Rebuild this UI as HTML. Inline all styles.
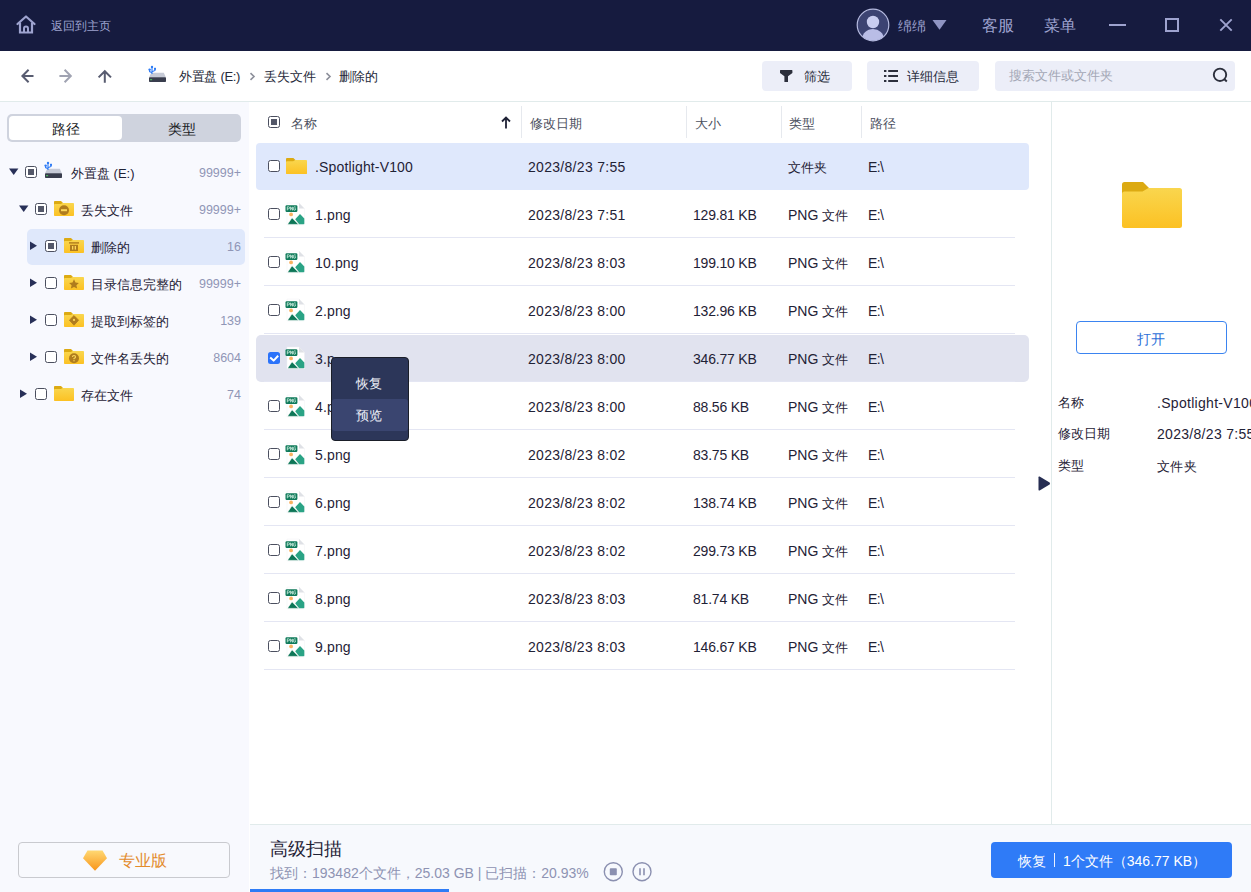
<!DOCTYPE html>
<html><head><meta charset="utf-8">
<style>
*{margin:0;padding:0;box-sizing:border-box}
html,body{width:1251px;height:892px;overflow:hidden;background:#fff;font-family:"Liberation Sans",sans-serif;color:#1f2236}
.a{position:absolute}
.t{position:absolute;white-space:nowrap;line-height:1}
#hdr{position:absolute;left:0;top:0;width:1251px;height:51px;background:#161b3f}
#tb{position:absolute;left:0;top:51px;width:1251px;height:51px;background:#fff;border-bottom:1px solid #e1ebeb}
#side{position:absolute;left:0;top:102px;width:249px;height:790px;background:#f8f9fe}
#main{position:absolute;left:249px;top:102px;width:802px;height:722px;background:#fff}
#right{position:absolute;left:1051px;top:102px;width:200px;height:722px;background:#fff;border-left:1px solid #e1ebeb}
#status{position:absolute;left:250px;top:824px;width:1001px;height:68px;background:#f7f9fd;border-top:1px solid #e1ebeb}
.cb{position:absolute;width:12px;height:12px;border:1.5px solid #4b4f5f;border-radius:2.5px;background:#fff}
.cb.part::after{content:"";position:absolute;left:1.5px;top:1.5px;width:6px;height:6px;background:#545869}
.sep{position:absolute;left:264px;width:751px;height:1px;background:#e4e6f3}
.hsep{position:absolute;top:118px;width:1px;height:32px;background:#e6e9ee}
.f14{font-size:14px}
</style></head><body>
<div id="hdr">
<svg class="a" style="left:16px;top:15px" width="20" height="19" viewBox="0 0 20 19"><path d="M1.5 9L10 1.5 18.5 9" fill="none" stroke="#9ea3cf" stroke-width="2.2" stroke-linecap="round" stroke-linejoin="round"/><path d="M4 7.5V17.5H16V7.5" fill="none" stroke="#9ea3cf" stroke-width="2.2"/><path d="M8 17.5V13.5Q8 11.5 10 11.5Q12 11.5 12 13.5V17.5" fill="none" stroke="#9ea3cf" stroke-width="2"/></svg>
<div class="t" style="left:51px;top:20px;font-size:12px;color:#9ea3cf">返回到主页</div>
<svg class="a" style="left:856px;top:8px" width="34" height="34" viewBox="0 0 34 34"><defs><clipPath id="avc"><circle cx="17" cy="17" r="15.5"/></clipPath></defs><circle cx="17" cy="17" r="15.8" fill="#3c4372" stroke="#b6bbe0" stroke-width="1.2"/><g clip-path="url(#avc)"><circle cx="17" cy="14" r="6.2" fill="#c9cdf0"/><ellipse cx="17" cy="31.5" rx="11" ry="10.5" fill="#b9bde6"/></g></svg>
<div class="t" style="left:898px;top:19px;font-size:14px;color:#9ea3cf">绵绵</div>
<svg class="a" style="left:932px;top:20px" width="15" height="10" viewBox="0 0 15 10"><path d="M.5 0h14L7.5 9.8z" fill="#8f94c2"/></svg>
<div class="t" style="left:982px;top:18px;font-size:16px;color:#9ea3cf">客服</div>
<div class="t" style="left:1044px;top:18px;font-size:16px;color:#9ea3cf">菜单</div>
<div class="a" style="left:1109px;top:24px;width:17px;height:2px;background:#9ea3cf"></div>
<div class="a" style="left:1165px;top:18px;width:14px;height:14px;border:2px solid #9ea3cf"></div>
<svg class="a" style="left:1219px;top:18px" width="14" height="14" viewBox="0 0 14 14"><path d="M1.3 1.3l11.4 11.4M12.7 1.3l-11.4 11.4" stroke="#9ea3cf" stroke-width="1.9"/></svg>
</div>
<div id="tb">
<svg class="a" style="left:20px;top:17px" width="16" height="16" viewBox="0 0 16 16"><path d="M13.5 8H3M8.6 1.8L2.4 8l6.2 6.2" fill="none" stroke="#585c70" stroke-width="2"/></svg>
<svg class="a" style="left:58px;top:17px" width="16" height="16" viewBox="0 0 16 16"><path d="M1.4 8H12M6.6 1.8L12.8 8l-6.2 6.2" fill="none" stroke="#a0a3b2" stroke-width="2"/></svg>
<svg class="a" style="left:96px;top:17px" width="18" height="16" viewBox="0 0 18 16"><path d="M8.8 14.8V3.4M2.6 9.4L8.8 3.2l6.2 6.2" fill="none" stroke="#585c70" stroke-width="2"/></svg>
<svg class="a" style="left:148px;top:14px" width="19" height="18" viewBox="0 0 19 18"><path d="M3.2 7.8H15.8L17.9 12.4H1z" fill="#c6cad6"/><rect x="1" y="12.3" width="17" height="4.7" rx="0.8" fill="#393d4d"/><rect x="2" y="14.1" width="2.2" height="1.2" rx="0.5" fill="#4fb360"/><g stroke="#2f7cf6" stroke-width="1.1" fill="none"><path d="M4 2v7M1.6 5v1.6L4 7.8M7 3.8v1.6L4 6.8"/></g><circle cx="4" cy="1.9" r="1.2" fill="#2f7cf6"/><circle cx="1.6" cy="4.6" r="1.2" fill="#2f7cf6"/><rect x="6" y="2.8" width="2" height="2" fill="#2f7cf6"/></svg>
<div class="t" style="left:179px;top:19px;font-size:13px;letter-spacing:-0.3px;color:#262a3a">外置盘 (E:)</div>
<svg class="a" style="left:249px;top:21px" width="7" height="9" viewBox="0 0 7 9"><path d="M1.5 1.2L5 4.5 1.5 7.8" fill="none" stroke="#8c8f9a" stroke-width="1.6"/></svg>
<div class="t" style="left:264px;top:19px;font-size:13px;color:#262a3a">丢失文件</div>
<svg class="a" style="left:325px;top:21px" width="7" height="9" viewBox="0 0 7 9"><path d="M1.5 1.2L5 4.5 1.5 7.8" fill="none" stroke="#8c8f9a" stroke-width="1.6"/></svg>
<div class="t" style="left:339px;top:19px;font-size:13px;color:#262a3a">删除的</div>
<div class="a" style="left:762px;top:10px;width:90px;height:30px;background:#eceef8;border-radius:4px"></div>
<svg class="a" style="left:780px;top:19px" width="13" height="12" viewBox="0 0 13 12"><path d="M0 .6Q0 0 .6 0H11.8Q12.4 0 12.4 .6V3L8 6.2V12H4.4V6.2L0 3z" fill="#2c2f3c"/></svg>
<div class="t" style="left:804px;top:19px;font-size:13px;color:#262a3a">筛选</div>
<div class="a" style="left:867px;top:10px;width:112px;height:30px;background:#eceef8;border-radius:4px"></div>
<svg class="a" style="left:884px;top:19px" width="14" height="12" viewBox="0 0 14 12"><g fill="#2c2f3c"><rect x="0" y="0" width="2.4" height="2" /><rect x="0" y="5" width="2.4" height="2"/><rect x="0" y="10" width="2.4" height="2"/><rect x="4.2" y="0" width="9.8" height="2"/><rect x="4.2" y="5" width="9.8" height="2"/><rect x="4.2" y="10" width="9.8" height="2"/></g></svg>
<div class="t" style="left:907px;top:19px;font-size:13px;color:#262a3a">详细信息</div>
<div class="a" style="left:995px;top:10px;width:240px;height:30px;background:#eceef8;border-radius:4px"></div>
<div class="t" style="left:1009px;top:18px;font-size:13px;color:#a4a8b6">搜索文件或文件夹</div>
<svg class="a" style="left:1211px;top:15px" width="18" height="18" viewBox="0 0 18 18"><circle cx="9" cy="8.8" r="6.2" fill="none" stroke="#2c2f3c" stroke-width="1.9"/><path d="M13.2 13l2.6 2.4" stroke="#2c2f3c" stroke-width="2" stroke-linecap="butt"/></svg>
</div>
<div id="side">
<div class="a" style="left:7px;top:12px;width:234px;height:28px;background:#cfd3de;border-radius:5px"></div>
<div class="a" style="left:9px;top:14px;width:113px;height:24px;background:#fff;border-radius:4px"></div>
<div class="t" style="left:52px;top:21px;font-size:13.5px;color:#1a1c24">路径</div>
<div class="t" style="left:168px;top:21px;font-size:13.5px;color:#1a1c24">类型</div>
<div class="a" style="left:27px;top:127px;width:218px;height:36px;background:#dfe8fb;border-radius:5px"></div>
<svg class="a" style="left:9px;top:66px" width="10" height="8" viewBox="0 0 10 8"><path d="M0 .5h9.4L4.7 7z" fill="#283058"/></svg>
<div class="cb part" style="left:25px;top:64px"></div>
<svg class="a" style="left:44px;top:59px" width="19" height="18" viewBox="0 0 19 18"><path d="M3.2 7.8H15.8L17.9 12.4H1z" fill="#c6cad6"/><rect x="1" y="12.3" width="17" height="4.7" rx="0.8" fill="#393d4d"/><rect x="2" y="14.1" width="2.2" height="1.2" rx="0.5" fill="#4fb360"/><g stroke="#2f7cf6" stroke-width="1.1" fill="none"><path d="M4 2v7M1.6 5v1.6L4 7.8M7 3.8v1.6L4 6.8"/></g><circle cx="4" cy="1.9" r="1.2" fill="#2f7cf6"/><circle cx="1.6" cy="4.6" r="1.2" fill="#2f7cf6"/><rect x="6" y="2.8" width="2" height="2" fill="#2f7cf6"/></svg>
<div class="t" style="left:71px;top:65px;font-size:13px;color:#1f2236">外置盘 (E:)</div>
<div class="t" style="right:8px;top:65px;font-size:12.5px;color:#9096b6">99999+</div>
<svg class="a" style="left:19px;top:103px" width="10" height="8" viewBox="0 0 10 8"><path d="M0 .5h9.4L4.7 7z" fill="#283058"/></svg>
<div class="cb part" style="left:35px;top:101px"></div>
<svg class="a" style="left:54px;top:99px" width="20" height="15" viewBox="0 0 60 46" preserveAspectRatio="none">
<defs><linearGradient id="fg54_99" x1="0" y1="0" x2="0" y2="1"><stop offset="0" stop-color="#f9d64e"/><stop offset="1" stop-color="#fcc123"/></linearGradient></defs>
<path d="M0 2.5Q0 0 2.5 0H21L27 6V14H0z" fill="#dcaa12"/>
<path d="M0 12Q0 9.4 2.5 9.4H20.5L26.5 6H57.5Q60 6 60 8.5V43.5Q60 46 57.5 46H2.5Q0 46 0 43.5z" fill="url(#fg54_99)"/>
<g transform="scale(3,3.067)"><circle cx="10" cy="9.2" r="5" fill="#b07c1d"/><rect x="7" y="8.2" width="6" height="2" fill="#fcd65a"/></g></svg>
<div class="t" style="left:81px;top:102px;font-size:13px;color:#1f2236">丢失文件</div>
<div class="t" style="right:8px;top:102px;font-size:12.5px;color:#9096b6">99999+</div>
<svg class="a" style="left:30px;top:139px" width="8" height="10" viewBox="0 0 8 10"><path d="M0 .5v8.6L7 4.8z" fill="#283058"/></svg>
<div class="cb part" style="left:45px;top:138px"></div>
<svg class="a" style="left:64px;top:136px" width="20" height="15" viewBox="0 0 60 46" preserveAspectRatio="none">
<defs><linearGradient id="fg64_136" x1="0" y1="0" x2="0" y2="1"><stop offset="0" stop-color="#f9d64e"/><stop offset="1" stop-color="#fcc123"/></linearGradient></defs>
<path d="M0 2.5Q0 0 2.5 0H21L27 6V14H0z" fill="#dcaa12"/>
<path d="M0 12Q0 9.4 2.5 9.4H20.5L26.5 6H57.5Q60 6 60 8.5V43.5Q60 46 57.5 46H2.5Q0 46 0 43.5z" fill="url(#fg64_136)"/>
<g transform="scale(3,3.067)"><rect x="5" y="4.2" width="10" height="1.4" fill="#b07c1d"/><path d="M6 6.8h8v6.2H6z" fill="#b07c1d"/><rect x="8" y="8" width="1.3" height="3.6" fill="#fcd65a"/><rect x="10.7" y="8" width="1.3" height="3.6" fill="#fcd65a"/></g></svg>
<div class="t" style="left:91px;top:139px;font-size:13px;color:#1f2236">删除的</div>
<div class="t" style="right:8px;top:139px;font-size:12.5px;color:#9096b6">16</div>
<svg class="a" style="left:30px;top:176px" width="8" height="10" viewBox="0 0 8 10"><path d="M0 .5v8.6L7 4.8z" fill="#283058"/></svg>
<div class="cb" style="left:45px;top:175px"></div>
<svg class="a" style="left:64px;top:173px" width="20" height="15" viewBox="0 0 60 46" preserveAspectRatio="none">
<defs><linearGradient id="fg64_173" x1="0" y1="0" x2="0" y2="1"><stop offset="0" stop-color="#f9d64e"/><stop offset="1" stop-color="#fcc123"/></linearGradient></defs>
<path d="M0 2.5Q0 0 2.5 0H21L27 6V14H0z" fill="#dcaa12"/>
<path d="M0 12Q0 9.4 2.5 9.4H20.5L26.5 6H57.5Q60 6 60 8.5V43.5Q60 46 57.5 46H2.5Q0 46 0 43.5z" fill="url(#fg64_173)"/>
<g transform="scale(3,3.067)"><path d="M10 4.3l1.5 3.2 3.4.4-2.5 2.3.7 3.4L10 12l-3.1 1.6.7-3.4L5.1 7.9l3.4-.4z" fill="#b07c1d"/></g></svg>
<div class="t" style="left:91px;top:176px;font-size:13px;color:#1f2236">目录信息完整的</div>
<div class="t" style="right:8px;top:176px;font-size:12.5px;color:#9096b6">99999+</div>
<svg class="a" style="left:30px;top:213px" width="8" height="10" viewBox="0 0 8 10"><path d="M0 .5v8.6L7 4.8z" fill="#283058"/></svg>
<div class="cb" style="left:45px;top:212px"></div>
<svg class="a" style="left:64px;top:210px" width="20" height="15" viewBox="0 0 60 46" preserveAspectRatio="none">
<defs><linearGradient id="fg64_210" x1="0" y1="0" x2="0" y2="1"><stop offset="0" stop-color="#f9d64e"/><stop offset="1" stop-color="#fcc123"/></linearGradient></defs>
<path d="M0 2.5Q0 0 2.5 0H21L27 6V14H0z" fill="#dcaa12"/>
<path d="M0 12Q0 9.4 2.5 9.4H20.5L26.5 6H57.5Q60 6 60 8.5V43.5Q60 46 57.5 46H2.5Q0 46 0 43.5z" fill="url(#fg64_210)"/>
<g transform="scale(3,3.067)"><path d="M10 3.6L14.6 8.2 10 13.2 5.4 8.2z" fill="#b07c1d" stroke="#b07c1d" stroke-width="0.8" stroke-linejoin="round"/><circle cx="10" cy="7.9" r="1.1" fill="#fcd65a"/></g></svg>
<div class="t" style="left:91px;top:213px;font-size:13px;color:#1f2236">提取到标签的</div>
<div class="t" style="right:8px;top:213px;font-size:12.5px;color:#9096b6">139</div>
<svg class="a" style="left:30px;top:250px" width="8" height="10" viewBox="0 0 8 10"><path d="M0 .5v8.6L7 4.8z" fill="#283058"/></svg>
<div class="cb" style="left:45px;top:249px"></div>
<svg class="a" style="left:64px;top:247px" width="20" height="15" viewBox="0 0 60 46" preserveAspectRatio="none">
<defs><linearGradient id="fg64_247" x1="0" y1="0" x2="0" y2="1"><stop offset="0" stop-color="#f9d64e"/><stop offset="1" stop-color="#fcc123"/></linearGradient></defs>
<path d="M0 2.5Q0 0 2.5 0H21L27 6V14H0z" fill="#dcaa12"/>
<path d="M0 12Q0 9.4 2.5 9.4H20.5L26.5 6H57.5Q60 6 60 8.5V43.5Q60 46 57.5 46H2.5Q0 46 0 43.5z" fill="url(#fg64_247)"/>
<g transform="scale(3,3.067)"><circle cx="10" cy="9.2" r="5" fill="#b07c1d"/><path d="M8.5 8.1q0-1.6 1.5-1.6t1.5 1.5q0 1-1.5 1.5v.8" fill="none" stroke="#fcd65a" stroke-width="1.2"/><circle cx="10" cy="11.8" r="0.7" fill="#fcd65a"/></g></svg>
<div class="t" style="left:91px;top:250px;font-size:13px;color:#1f2236">文件名丢失的</div>
<div class="t" style="right:8px;top:250px;font-size:12.5px;color:#9096b6">8604</div>
<svg class="a" style="left:20px;top:287px" width="8" height="10" viewBox="0 0 8 10"><path d="M0 .5v8.6L7 4.8z" fill="#283058"/></svg>
<div class="cb" style="left:35px;top:286px"></div>
<svg class="a" style="left:54px;top:284px" width="20" height="15" viewBox="0 0 60 46" preserveAspectRatio="none">
<defs><linearGradient id="fg54_284" x1="0" y1="0" x2="0" y2="1"><stop offset="0" stop-color="#f9d64e"/><stop offset="1" stop-color="#fcc123"/></linearGradient></defs>
<path d="M0 2.5Q0 0 2.5 0H21L27 6V14H0z" fill="#dcaa12"/>
<path d="M0 12Q0 9.4 2.5 9.4H20.5L26.5 6H57.5Q60 6 60 8.5V43.5Q60 46 57.5 46H2.5Q0 46 0 43.5z" fill="url(#fg54_284)"/>
<g transform="scale(3,3.067)"></g></svg>
<div class="t" style="left:81px;top:287px;font-size:13px;color:#1f2236">存在文件</div>
<div class="t" style="right:8px;top:287px;font-size:12.5px;color:#9096b6">74</div>
<div class="a" style="left:18px;top:740px;width:212px;height:36px;border:1px solid #c9cacf;border-radius:4px;background:#f8f9fd"></div>
<svg class="a" style="left:83px;top:748px" width="24" height="21" viewBox="0 0 24 21"><defs><linearGradient id="dg" x1="0" y1="0" x2="0" y2="1"><stop offset="0" stop-color="#ffd872"/><stop offset="1" stop-color="#f8941a"/></linearGradient></defs><path d="M4.5 .6H19.5L24 8.3 12 20.7 0 8.3z" fill="url(#dg)"/></svg>
<div class="t" style="left:119px;top:751px;font-size:16px;color:#e38b2c">专业版</div>
</div>
<div id="main"></div>
<div class="cb part" style="left:268px;top:116px"></div>
<div class="t" style="left:291px;top:117px;font-size:13px;color:#4b4f5e">名称</div>
<svg class="a" style="left:501px;top:116px" width="10" height="13" viewBox="0 0 10 13"><path d="M5 12.5V1.5M1 5.5l4-4 4 4" fill="none" stroke="#1f2236" stroke-width="1.8"/></svg>
<div class="t" style="left:530px;top:117px;font-size:13px;color:#4b4f5e">修改日期</div>
<div class="t" style="left:695px;top:117px;font-size:13px;color:#4b4f5e">大小</div>
<div class="t" style="left:789px;top:117px;font-size:13px;color:#4b4f5e">类型</div>
<div class="t" style="left:870px;top:117px;font-size:13px;color:#4b4f5e">路径</div>
<div class="hsep" style="left:521px;top:106px"></div>
<div class="hsep" style="left:686px;top:106px"></div>
<div class="hsep" style="left:781px;top:106px"></div>
<div class="hsep" style="left:861px;top:106px"></div>
<div class="a" style="left:256px;top:143px;width:773px;height:47px;background:#dfe8fc;border-radius:4px"></div>
<div class="a" style="left:256px;top:335px;width:773px;height:47px;background:#e1e3ef;border-radius:5px"></div>
<div class="cb" style="left:268px;top:160px"></div>
<svg class="a" style="left:286px;top:158px" width="21" height="16" viewBox="0 0 60 46" preserveAspectRatio="none">
<defs><linearGradient id="fg286_158" x1="0" y1="0" x2="0" y2="1"><stop offset="0" stop-color="#f9d64e"/><stop offset="1" stop-color="#fcc123"/></linearGradient></defs>
<path d="M0 2.5Q0 0 2.5 0H21L27 6V14H0z" fill="#dcaa12"/>
<path d="M0 12Q0 9.4 2.5 9.4H20.5L26.5 6H57.5Q60 6 60 8.5V43.5Q60 46 57.5 46H2.5Q0 46 0 43.5z" fill="url(#fg286_158)"/>
<g transform="scale(3,3.067)"></g></svg>
<div class="t" style="left:315px;top:160px;font-size:14px;letter-spacing:0.15px;color:#1f2236">.Spotlight-V100</div>
<div class="t" style="left:528px;top:160px;font-size:14px;letter-spacing:0.3px;color:#1f2236">2023/8/23 7:55</div>
<div class="t" style="left:788px;top:160px;font-size:14px;color:#1f2236"><span style="font-size:13px">文件夹</span></div>
<div class="t" style="left:868px;top:160px;font-size:14px;letter-spacing:-0.6px;color:#1f2236">E:\</div>
<div class="sep" style="top:237px"></div>
<div class="cb" style="left:268px;top:208px"></div>
<svg class="a" style="left:282px;top:200px" width="26" height="28" viewBox="0 0 26 28">
<path d="M5 3.1H17L22.4 8.5V24.8H5z" fill="#fff" stroke="#eef0f3" stroke-width="0.5"/><path d="M17 3.1L22.4 8.5H17z" fill="#dfe1e6"/>
<rect x="3.5" y="5.2" width="11.9" height="6.7" rx="1.2" fill="#0f7a5a"/>
<path d="M5.3 10.3V6.8H6.6Q7.6 6.8 7.6 7.8Q7.6 8.8 6.6 8.8H5.3M8.6 10.3V6.8L10.6 10.3V6.8M13.8 7.4Q13.4 6.8 12.6 6.8Q11.5 6.8 11.5 8.55Q11.5 10.3 12.6 10.3Q13.6 10.3 13.6 9.2V8.7H12.6" fill="none" stroke="#bfe3d5" stroke-width="0.9"/>
<circle cx="9.1" cy="14.4" r="1.9" fill="#f9b262"/>
<path d="M18 14.1L22.3 18.4V23.4Q22.3 24.2 21.5 24.2H17L13.2 19.3z" fill="#2aa385"/>
<path d="M10 17.8L16.6 24.4H6.6Q5.4 24.4 6.1 23.4z" fill="#0d7657" stroke="#fff" stroke-width="0.6"/>
</svg>
<div class="t" style="left:315px;top:208px;font-size:14px;letter-spacing:0.15px;color:#1f2236">1.png</div>
<div class="t" style="left:528px;top:208px;font-size:14px;letter-spacing:0.3px;color:#1f2236">2023/8/23 7:51</div>
<div class="t" style="left:693px;top:208px;font-size:14px;letter-spacing:-0.2px;color:#1f2236">129.81 KB</div>
<div class="t" style="left:788px;top:208px;font-size:14px;color:#1f2236">PNG <span style="font-size:13px">文件</span></div>
<div class="t" style="left:868px;top:208px;font-size:14px;letter-spacing:-0.6px;color:#1f2236">E:\</div>
<div class="sep" style="top:285px"></div>
<div class="cb" style="left:268px;top:256px"></div>
<svg class="a" style="left:282px;top:248px" width="26" height="28" viewBox="0 0 26 28">
<path d="M5 3.1H17L22.4 8.5V24.8H5z" fill="#fff" stroke="#eef0f3" stroke-width="0.5"/><path d="M17 3.1L22.4 8.5H17z" fill="#dfe1e6"/>
<rect x="3.5" y="5.2" width="11.9" height="6.7" rx="1.2" fill="#0f7a5a"/>
<path d="M5.3 10.3V6.8H6.6Q7.6 6.8 7.6 7.8Q7.6 8.8 6.6 8.8H5.3M8.6 10.3V6.8L10.6 10.3V6.8M13.8 7.4Q13.4 6.8 12.6 6.8Q11.5 6.8 11.5 8.55Q11.5 10.3 12.6 10.3Q13.6 10.3 13.6 9.2V8.7H12.6" fill="none" stroke="#bfe3d5" stroke-width="0.9"/>
<circle cx="9.1" cy="14.4" r="1.9" fill="#f9b262"/>
<path d="M18 14.1L22.3 18.4V23.4Q22.3 24.2 21.5 24.2H17L13.2 19.3z" fill="#2aa385"/>
<path d="M10 17.8L16.6 24.4H6.6Q5.4 24.4 6.1 23.4z" fill="#0d7657" stroke="#fff" stroke-width="0.6"/>
</svg>
<div class="t" style="left:315px;top:256px;font-size:14px;letter-spacing:0.15px;color:#1f2236">10.png</div>
<div class="t" style="left:528px;top:256px;font-size:14px;letter-spacing:0.3px;color:#1f2236">2023/8/23 8:03</div>
<div class="t" style="left:693px;top:256px;font-size:14px;letter-spacing:-0.2px;color:#1f2236">199.10 KB</div>
<div class="t" style="left:788px;top:256px;font-size:14px;color:#1f2236">PNG <span style="font-size:13px">文件</span></div>
<div class="t" style="left:868px;top:256px;font-size:14px;letter-spacing:-0.6px;color:#1f2236">E:\</div>
<div class="sep" style="top:333px"></div>
<div class="cb" style="left:268px;top:304px"></div>
<svg class="a" style="left:282px;top:296px" width="26" height="28" viewBox="0 0 26 28">
<path d="M5 3.1H17L22.4 8.5V24.8H5z" fill="#fff" stroke="#eef0f3" stroke-width="0.5"/><path d="M17 3.1L22.4 8.5H17z" fill="#dfe1e6"/>
<rect x="3.5" y="5.2" width="11.9" height="6.7" rx="1.2" fill="#0f7a5a"/>
<path d="M5.3 10.3V6.8H6.6Q7.6 6.8 7.6 7.8Q7.6 8.8 6.6 8.8H5.3M8.6 10.3V6.8L10.6 10.3V6.8M13.8 7.4Q13.4 6.8 12.6 6.8Q11.5 6.8 11.5 8.55Q11.5 10.3 12.6 10.3Q13.6 10.3 13.6 9.2V8.7H12.6" fill="none" stroke="#bfe3d5" stroke-width="0.9"/>
<circle cx="9.1" cy="14.4" r="1.9" fill="#f9b262"/>
<path d="M18 14.1L22.3 18.4V23.4Q22.3 24.2 21.5 24.2H17L13.2 19.3z" fill="#2aa385"/>
<path d="M10 17.8L16.6 24.4H6.6Q5.4 24.4 6.1 23.4z" fill="#0d7657" stroke="#fff" stroke-width="0.6"/>
</svg>
<div class="t" style="left:315px;top:304px;font-size:14px;letter-spacing:0.15px;color:#1f2236">2.png</div>
<div class="t" style="left:528px;top:304px;font-size:14px;letter-spacing:0.3px;color:#1f2236">2023/8/23 8:00</div>
<div class="t" style="left:693px;top:304px;font-size:14px;letter-spacing:-0.2px;color:#1f2236">132.96 KB</div>
<div class="t" style="left:788px;top:304px;font-size:14px;color:#1f2236">PNG <span style="font-size:13px">文件</span></div>
<div class="t" style="left:868px;top:304px;font-size:14px;letter-spacing:-0.6px;color:#1f2236">E:\</div>
<div class="sep" style="top:381px"></div>
<div class="a" style="left:268px;top:352px;width:12px;height:12px;background:#2b73fa;border-radius:2.5px"></div>
<svg class="a" style="left:268px;top:352px" width="12" height="12" viewBox="0 0 12 12"><path d="M2.2 5.6l3.4 3 4.6-4.8" fill="none" stroke="#fff" stroke-width="2" stroke-linejoin="round"/></svg>
<svg class="a" style="left:282px;top:344px" width="26" height="28" viewBox="0 0 26 28">
<path d="M5 3.1H17L22.4 8.5V24.8H5z" fill="#fff" stroke="#eef0f3" stroke-width="0.5"/><path d="M17 3.1L22.4 8.5H17z" fill="#dfe1e6"/>
<rect x="3.5" y="5.2" width="11.9" height="6.7" rx="1.2" fill="#0f7a5a"/>
<path d="M5.3 10.3V6.8H6.6Q7.6 6.8 7.6 7.8Q7.6 8.8 6.6 8.8H5.3M8.6 10.3V6.8L10.6 10.3V6.8M13.8 7.4Q13.4 6.8 12.6 6.8Q11.5 6.8 11.5 8.55Q11.5 10.3 12.6 10.3Q13.6 10.3 13.6 9.2V8.7H12.6" fill="none" stroke="#bfe3d5" stroke-width="0.9"/>
<circle cx="9.1" cy="14.4" r="1.9" fill="#f9b262"/>
<path d="M18 14.1L22.3 18.4V23.4Q22.3 24.2 21.5 24.2H17L13.2 19.3z" fill="#2aa385"/>
<path d="M10 17.8L16.6 24.4H6.6Q5.4 24.4 6.1 23.4z" fill="#0d7657" stroke="#fff" stroke-width="0.6"/>
</svg>
<div class="t" style="left:315px;top:352px;font-size:14px;letter-spacing:0.15px;color:#1f2236">3.p</div>
<div class="t" style="left:528px;top:352px;font-size:14px;letter-spacing:0.3px;color:#1f2236">2023/8/23 8:00</div>
<div class="t" style="left:693px;top:352px;font-size:14px;letter-spacing:-0.2px;color:#1f2236">346.77 KB</div>
<div class="t" style="left:788px;top:352px;font-size:14px;color:#1f2236">PNG <span style="font-size:13px">文件</span></div>
<div class="t" style="left:868px;top:352px;font-size:14px;letter-spacing:-0.6px;color:#1f2236">E:\</div>
<div class="sep" style="top:429px"></div>
<div class="cb" style="left:268px;top:400px"></div>
<svg class="a" style="left:282px;top:392px" width="26" height="28" viewBox="0 0 26 28">
<path d="M5 3.1H17L22.4 8.5V24.8H5z" fill="#fff" stroke="#eef0f3" stroke-width="0.5"/><path d="M17 3.1L22.4 8.5H17z" fill="#dfe1e6"/>
<rect x="3.5" y="5.2" width="11.9" height="6.7" rx="1.2" fill="#0f7a5a"/>
<path d="M5.3 10.3V6.8H6.6Q7.6 6.8 7.6 7.8Q7.6 8.8 6.6 8.8H5.3M8.6 10.3V6.8L10.6 10.3V6.8M13.8 7.4Q13.4 6.8 12.6 6.8Q11.5 6.8 11.5 8.55Q11.5 10.3 12.6 10.3Q13.6 10.3 13.6 9.2V8.7H12.6" fill="none" stroke="#bfe3d5" stroke-width="0.9"/>
<circle cx="9.1" cy="14.4" r="1.9" fill="#f9b262"/>
<path d="M18 14.1L22.3 18.4V23.4Q22.3 24.2 21.5 24.2H17L13.2 19.3z" fill="#2aa385"/>
<path d="M10 17.8L16.6 24.4H6.6Q5.4 24.4 6.1 23.4z" fill="#0d7657" stroke="#fff" stroke-width="0.6"/>
</svg>
<div class="t" style="left:315px;top:400px;font-size:14px;letter-spacing:0.15px;color:#1f2236">4.p</div>
<div class="t" style="left:528px;top:400px;font-size:14px;letter-spacing:0.3px;color:#1f2236">2023/8/23 8:00</div>
<div class="t" style="left:693px;top:400px;font-size:14px;letter-spacing:-0.2px;color:#1f2236">88.56 KB</div>
<div class="t" style="left:788px;top:400px;font-size:14px;color:#1f2236">PNG <span style="font-size:13px">文件</span></div>
<div class="t" style="left:868px;top:400px;font-size:14px;letter-spacing:-0.6px;color:#1f2236">E:\</div>
<div class="sep" style="top:477px"></div>
<div class="cb" style="left:268px;top:448px"></div>
<svg class="a" style="left:282px;top:440px" width="26" height="28" viewBox="0 0 26 28">
<path d="M5 3.1H17L22.4 8.5V24.8H5z" fill="#fff" stroke="#eef0f3" stroke-width="0.5"/><path d="M17 3.1L22.4 8.5H17z" fill="#dfe1e6"/>
<rect x="3.5" y="5.2" width="11.9" height="6.7" rx="1.2" fill="#0f7a5a"/>
<path d="M5.3 10.3V6.8H6.6Q7.6 6.8 7.6 7.8Q7.6 8.8 6.6 8.8H5.3M8.6 10.3V6.8L10.6 10.3V6.8M13.8 7.4Q13.4 6.8 12.6 6.8Q11.5 6.8 11.5 8.55Q11.5 10.3 12.6 10.3Q13.6 10.3 13.6 9.2V8.7H12.6" fill="none" stroke="#bfe3d5" stroke-width="0.9"/>
<circle cx="9.1" cy="14.4" r="1.9" fill="#f9b262"/>
<path d="M18 14.1L22.3 18.4V23.4Q22.3 24.2 21.5 24.2H17L13.2 19.3z" fill="#2aa385"/>
<path d="M10 17.8L16.6 24.4H6.6Q5.4 24.4 6.1 23.4z" fill="#0d7657" stroke="#fff" stroke-width="0.6"/>
</svg>
<div class="t" style="left:315px;top:448px;font-size:14px;letter-spacing:0.15px;color:#1f2236">5.png</div>
<div class="t" style="left:528px;top:448px;font-size:14px;letter-spacing:0.3px;color:#1f2236">2023/8/23 8:02</div>
<div class="t" style="left:693px;top:448px;font-size:14px;letter-spacing:-0.2px;color:#1f2236">83.75 KB</div>
<div class="t" style="left:788px;top:448px;font-size:14px;color:#1f2236">PNG <span style="font-size:13px">文件</span></div>
<div class="t" style="left:868px;top:448px;font-size:14px;letter-spacing:-0.6px;color:#1f2236">E:\</div>
<div class="sep" style="top:525px"></div>
<div class="cb" style="left:268px;top:496px"></div>
<svg class="a" style="left:282px;top:488px" width="26" height="28" viewBox="0 0 26 28">
<path d="M5 3.1H17L22.4 8.5V24.8H5z" fill="#fff" stroke="#eef0f3" stroke-width="0.5"/><path d="M17 3.1L22.4 8.5H17z" fill="#dfe1e6"/>
<rect x="3.5" y="5.2" width="11.9" height="6.7" rx="1.2" fill="#0f7a5a"/>
<path d="M5.3 10.3V6.8H6.6Q7.6 6.8 7.6 7.8Q7.6 8.8 6.6 8.8H5.3M8.6 10.3V6.8L10.6 10.3V6.8M13.8 7.4Q13.4 6.8 12.6 6.8Q11.5 6.8 11.5 8.55Q11.5 10.3 12.6 10.3Q13.6 10.3 13.6 9.2V8.7H12.6" fill="none" stroke="#bfe3d5" stroke-width="0.9"/>
<circle cx="9.1" cy="14.4" r="1.9" fill="#f9b262"/>
<path d="M18 14.1L22.3 18.4V23.4Q22.3 24.2 21.5 24.2H17L13.2 19.3z" fill="#2aa385"/>
<path d="M10 17.8L16.6 24.4H6.6Q5.4 24.4 6.1 23.4z" fill="#0d7657" stroke="#fff" stroke-width="0.6"/>
</svg>
<div class="t" style="left:315px;top:496px;font-size:14px;letter-spacing:0.15px;color:#1f2236">6.png</div>
<div class="t" style="left:528px;top:496px;font-size:14px;letter-spacing:0.3px;color:#1f2236">2023/8/23 8:02</div>
<div class="t" style="left:693px;top:496px;font-size:14px;letter-spacing:-0.2px;color:#1f2236">138.74 KB</div>
<div class="t" style="left:788px;top:496px;font-size:14px;color:#1f2236">PNG <span style="font-size:13px">文件</span></div>
<div class="t" style="left:868px;top:496px;font-size:14px;letter-spacing:-0.6px;color:#1f2236">E:\</div>
<div class="sep" style="top:573px"></div>
<div class="cb" style="left:268px;top:544px"></div>
<svg class="a" style="left:282px;top:536px" width="26" height="28" viewBox="0 0 26 28">
<path d="M5 3.1H17L22.4 8.5V24.8H5z" fill="#fff" stroke="#eef0f3" stroke-width="0.5"/><path d="M17 3.1L22.4 8.5H17z" fill="#dfe1e6"/>
<rect x="3.5" y="5.2" width="11.9" height="6.7" rx="1.2" fill="#0f7a5a"/>
<path d="M5.3 10.3V6.8H6.6Q7.6 6.8 7.6 7.8Q7.6 8.8 6.6 8.8H5.3M8.6 10.3V6.8L10.6 10.3V6.8M13.8 7.4Q13.4 6.8 12.6 6.8Q11.5 6.8 11.5 8.55Q11.5 10.3 12.6 10.3Q13.6 10.3 13.6 9.2V8.7H12.6" fill="none" stroke="#bfe3d5" stroke-width="0.9"/>
<circle cx="9.1" cy="14.4" r="1.9" fill="#f9b262"/>
<path d="M18 14.1L22.3 18.4V23.4Q22.3 24.2 21.5 24.2H17L13.2 19.3z" fill="#2aa385"/>
<path d="M10 17.8L16.6 24.4H6.6Q5.4 24.4 6.1 23.4z" fill="#0d7657" stroke="#fff" stroke-width="0.6"/>
</svg>
<div class="t" style="left:315px;top:544px;font-size:14px;letter-spacing:0.15px;color:#1f2236">7.png</div>
<div class="t" style="left:528px;top:544px;font-size:14px;letter-spacing:0.3px;color:#1f2236">2023/8/23 8:02</div>
<div class="t" style="left:693px;top:544px;font-size:14px;letter-spacing:-0.2px;color:#1f2236">299.73 KB</div>
<div class="t" style="left:788px;top:544px;font-size:14px;color:#1f2236">PNG <span style="font-size:13px">文件</span></div>
<div class="t" style="left:868px;top:544px;font-size:14px;letter-spacing:-0.6px;color:#1f2236">E:\</div>
<div class="sep" style="top:621px"></div>
<div class="cb" style="left:268px;top:592px"></div>
<svg class="a" style="left:282px;top:584px" width="26" height="28" viewBox="0 0 26 28">
<path d="M5 3.1H17L22.4 8.5V24.8H5z" fill="#fff" stroke="#eef0f3" stroke-width="0.5"/><path d="M17 3.1L22.4 8.5H17z" fill="#dfe1e6"/>
<rect x="3.5" y="5.2" width="11.9" height="6.7" rx="1.2" fill="#0f7a5a"/>
<path d="M5.3 10.3V6.8H6.6Q7.6 6.8 7.6 7.8Q7.6 8.8 6.6 8.8H5.3M8.6 10.3V6.8L10.6 10.3V6.8M13.8 7.4Q13.4 6.8 12.6 6.8Q11.5 6.8 11.5 8.55Q11.5 10.3 12.6 10.3Q13.6 10.3 13.6 9.2V8.7H12.6" fill="none" stroke="#bfe3d5" stroke-width="0.9"/>
<circle cx="9.1" cy="14.4" r="1.9" fill="#f9b262"/>
<path d="M18 14.1L22.3 18.4V23.4Q22.3 24.2 21.5 24.2H17L13.2 19.3z" fill="#2aa385"/>
<path d="M10 17.8L16.6 24.4H6.6Q5.4 24.4 6.1 23.4z" fill="#0d7657" stroke="#fff" stroke-width="0.6"/>
</svg>
<div class="t" style="left:315px;top:592px;font-size:14px;letter-spacing:0.15px;color:#1f2236">8.png</div>
<div class="t" style="left:528px;top:592px;font-size:14px;letter-spacing:0.3px;color:#1f2236">2023/8/23 8:03</div>
<div class="t" style="left:693px;top:592px;font-size:14px;letter-spacing:-0.2px;color:#1f2236">81.74 KB</div>
<div class="t" style="left:788px;top:592px;font-size:14px;color:#1f2236">PNG <span style="font-size:13px">文件</span></div>
<div class="t" style="left:868px;top:592px;font-size:14px;letter-spacing:-0.6px;color:#1f2236">E:\</div>
<div class="sep" style="top:669px"></div>
<div class="cb" style="left:268px;top:640px"></div>
<svg class="a" style="left:282px;top:632px" width="26" height="28" viewBox="0 0 26 28">
<path d="M5 3.1H17L22.4 8.5V24.8H5z" fill="#fff" stroke="#eef0f3" stroke-width="0.5"/><path d="M17 3.1L22.4 8.5H17z" fill="#dfe1e6"/>
<rect x="3.5" y="5.2" width="11.9" height="6.7" rx="1.2" fill="#0f7a5a"/>
<path d="M5.3 10.3V6.8H6.6Q7.6 6.8 7.6 7.8Q7.6 8.8 6.6 8.8H5.3M8.6 10.3V6.8L10.6 10.3V6.8M13.8 7.4Q13.4 6.8 12.6 6.8Q11.5 6.8 11.5 8.55Q11.5 10.3 12.6 10.3Q13.6 10.3 13.6 9.2V8.7H12.6" fill="none" stroke="#bfe3d5" stroke-width="0.9"/>
<circle cx="9.1" cy="14.4" r="1.9" fill="#f9b262"/>
<path d="M18 14.1L22.3 18.4V23.4Q22.3 24.2 21.5 24.2H17L13.2 19.3z" fill="#2aa385"/>
<path d="M10 17.8L16.6 24.4H6.6Q5.4 24.4 6.1 23.4z" fill="#0d7657" stroke="#fff" stroke-width="0.6"/>
</svg>
<div class="t" style="left:315px;top:640px;font-size:14px;letter-spacing:0.15px;color:#1f2236">9.png</div>
<div class="t" style="left:528px;top:640px;font-size:14px;letter-spacing:0.3px;color:#1f2236">2023/8/23 8:03</div>
<div class="t" style="left:693px;top:640px;font-size:14px;letter-spacing:-0.2px;color:#1f2236">146.67 KB</div>
<div class="t" style="left:788px;top:640px;font-size:14px;color:#1f2236">PNG <span style="font-size:13px">文件</span></div>
<div class="t" style="left:868px;top:640px;font-size:14px;letter-spacing:-0.6px;color:#1f2236">E:\</div>
<div class="a" style="left:331px;top:357px;width:78px;height:84px;background:#2c3659;border:1px solid #1a1e28;border-radius:4px"></div>
<div class="a" style="left:332px;top:399px;width:76px;height:32px;background:#3a4570;border-radius:3px"></div>
<div class="t" style="left:356px;top:377px;font-size:13px;color:#eef0f8">恢复</div>
<div class="t" style="left:356px;top:409px;font-size:13px;color:#eef0f8">预览</div>
<div id="right"></div>
<svg class="a" style="left:1122px;top:182px" width="60" height="46" viewBox="0 0 60 46" preserveAspectRatio="none">
<defs><linearGradient id="fg1122_182" x1="0" y1="0" x2="0" y2="1"><stop offset="0" stop-color="#f9d64e"/><stop offset="1" stop-color="#fcc123"/></linearGradient></defs>
<path d="M0 2.5Q0 0 2.5 0H21L27 6V14H0z" fill="#dcaa12"/>
<path d="M0 12Q0 9.4 2.5 9.4H20.5L26.5 6H57.5Q60 6 60 8.5V43.5Q60 46 57.5 46H2.5Q0 46 0 43.5z" fill="url(#fg1122_182)"/>
<g transform="scale(3,3.067)"></g></svg>
<div class="a" style="left:1076px;top:321px;width:151px;height:33px;border:1px solid #3b84f0;border-radius:4px;background:#fff"></div>
<div class="t" style="left:1137px;top:332px;font-size:14px;color:#2c6fd8">打开</div>
<div class="t" style="left:1058px;top:396px;font-size:13px;color:#1f2236">名称</div>
<div class="t" style="left:1157px;top:396px;font-size:14px;letter-spacing:0.3px;color:#1f2236">.Spotlight-V100</div>
<div class="t" style="left:1058px;top:427px;font-size:13px;color:#1f2236">修改日期</div>
<div class="t" style="left:1157px;top:427px;font-size:14px;letter-spacing:0.3px;color:#1f2236">2023/8/23 7:55</div>
<div class="t" style="left:1058px;top:459px;font-size:13px;color:#1f2236">类型</div>
<div class="t" style="left:1157px;top:459px;font-size:14px;letter-spacing:0.3px;color:#1f2236"><span style="font-size:13px">文件夹</span></div>
<svg class="a" style="left:1038px;top:476px" width="13" height="15" viewBox="0 0 13 15"><path d="M.5 1.2Q.5 0 1.6.6L11.6 6.6Q12.5 7.5 11.6 8.4L1.6 14.4Q.5 15 .5 13.8z" fill="#262d52"/></svg>
<div id="status"></div>
<div class="t" style="left:270px;top:840px;font-size:18px;color:#1f2236">高级扫描</div>
<div class="t" style="left:270px;top:866px;font-size:14px;color:#8e93b3">找到：193482个文件，25.03 GB | 已扫描：20.93%</div>
<svg class="a" style="left:603px;top:862px" width="21" height="20" viewBox="0 0 21 20"><circle cx="10.3" cy="9.7" r="9" fill="none" stroke="#8b90b0" stroke-width="1.4"/><rect x="6.8" y="6.2" width="7" height="7" rx="0.8" fill="#8b90b0"/></svg>
<svg class="a" style="left:632px;top:862px" width="21" height="20" viewBox="0 0 21 20"><circle cx="10" cy="9.7" r="9" fill="none" stroke="#8b90b0" stroke-width="1.4"/><path d="M8 6.2v7M12 6.2v7" stroke="#8b90b0" stroke-width="1.6"/></svg>
<div class="a" style="left:250px;top:889px;width:199px;height:3px;background:#2e7cf6"></div>
<div class="a" style="left:991px;top:842px;width:241px;height:36px;background:#2f7bf7;border-radius:4px"></div>
<div class="t" style="left:1018px;top:854px;font-size:14px;color:#fff">恢复</div>
<div class="a" style="left:1054px;top:853px;width:1px;height:14px;background:#e8f0ff"></div>
<div class="t" style="left:1063px;top:854px;font-size:14px;color:#fff">1个文件（346.77 KB）</div>
</body></html>
